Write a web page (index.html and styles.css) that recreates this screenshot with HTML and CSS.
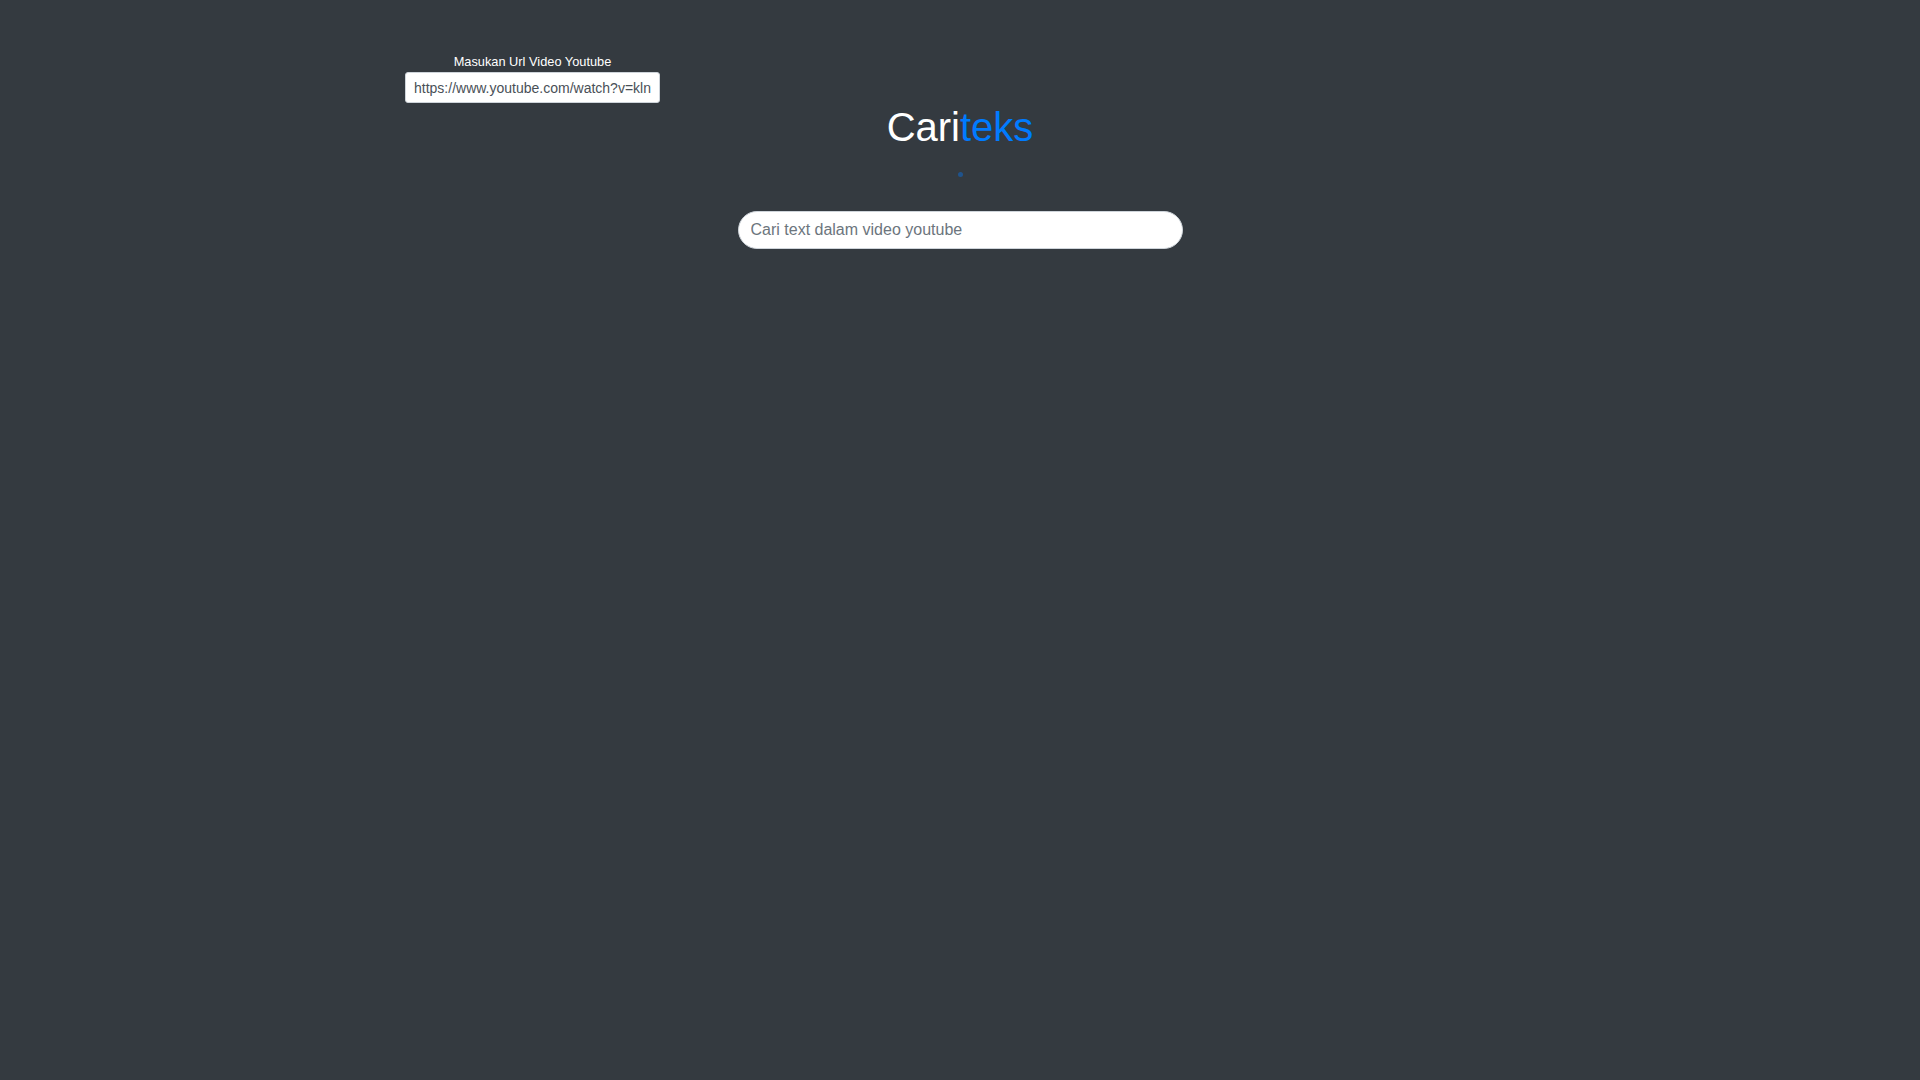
FILE: index.html
```html
<!DOCTYPE html>
<html lang="id">
<head>
<meta charset="utf-8">
<title>Cariteks</title>
<link rel="stylesheet" href="styles.css">
</head>
<body>
<div class="container">
  <div class="row">
    <div class="col-url">
      <label class="url-label" for="url">Masukan Url Video Youtube</label>
      <input id="url" class="url-input" type="text" value="https://www.youtube.com/watch?v=klnvttPfOUM">
    </div>
  </div>
  <h1 class="title">Cari<span class="accent">teks</span></h1>
  <div class="loader-wrap"><span class="loader"></span></div>
  <div class="search-wrap">
    <input class="search-input" type="text" placeholder="Cari text dalam video youtube">
  </div>
</div>
</body>
</html>
```
FILE: styles.css
```css
* { box-sizing: border-box; }
html, body { margin: 0; padding: 0; }
body {
  background: #343a40;
  font-family: "Liberation Sans", Arial, sans-serif;
  color: #fff;
  min-height: 1080px;
}
.container {
  width: 1140px;
  margin: 0 auto;
  padding: 51px 15px 0;
}
.row {
  display: flex;
}
.col-url {
  width: 255px;
  display: flex;
  flex-direction: column;
  align-items: stretch;
}
.url-label {
  font-size: 12.8px;
  line-height: 21px;
  text-align: center;
  color: #fff;
}
.url-input {
  height: 31px;
  width: 255px;
  padding: 4px 8px;
  font-family: "Liberation Sans", Arial, sans-serif;
  font-size: 14px;
  line-height: 21px;
  color: #495057;
  background: #fff;
  border: 1px solid #ced4da;
  border-radius: 3px;
  outline: none;
}
.title {
  margin: 0;
  text-align: center;
  font-size: 40px;
  font-weight: 400;
  line-height: 48px;
  color: #fff;
}
.accent { color: #007bff; }
.loader-wrap {
  display: flex;
  justify-content: center;
  margin-top: 21px;
  height: 6px;
}
.loader {
  display: block;
  width: 5px;
  height: 5px;
  border-radius: 50%;
  background: rgba(0, 123, 255, 0.4);
}
.search-wrap {
  display: flex;
  justify-content: center;
  margin-top: 33px;
}
.search-input {
  width: 445px;
  height: 38px;
  padding: 6px 12px;
  font-family: "Liberation Sans", Arial, sans-serif;
  font-size: 16px;
  line-height: 24px;
  color: #495057;
  background: #fff;
  border: 1px solid #ced4da;
  border-radius: 20px;
  outline: none;
}
.search-input::placeholder { color: #6c757d; }
```
